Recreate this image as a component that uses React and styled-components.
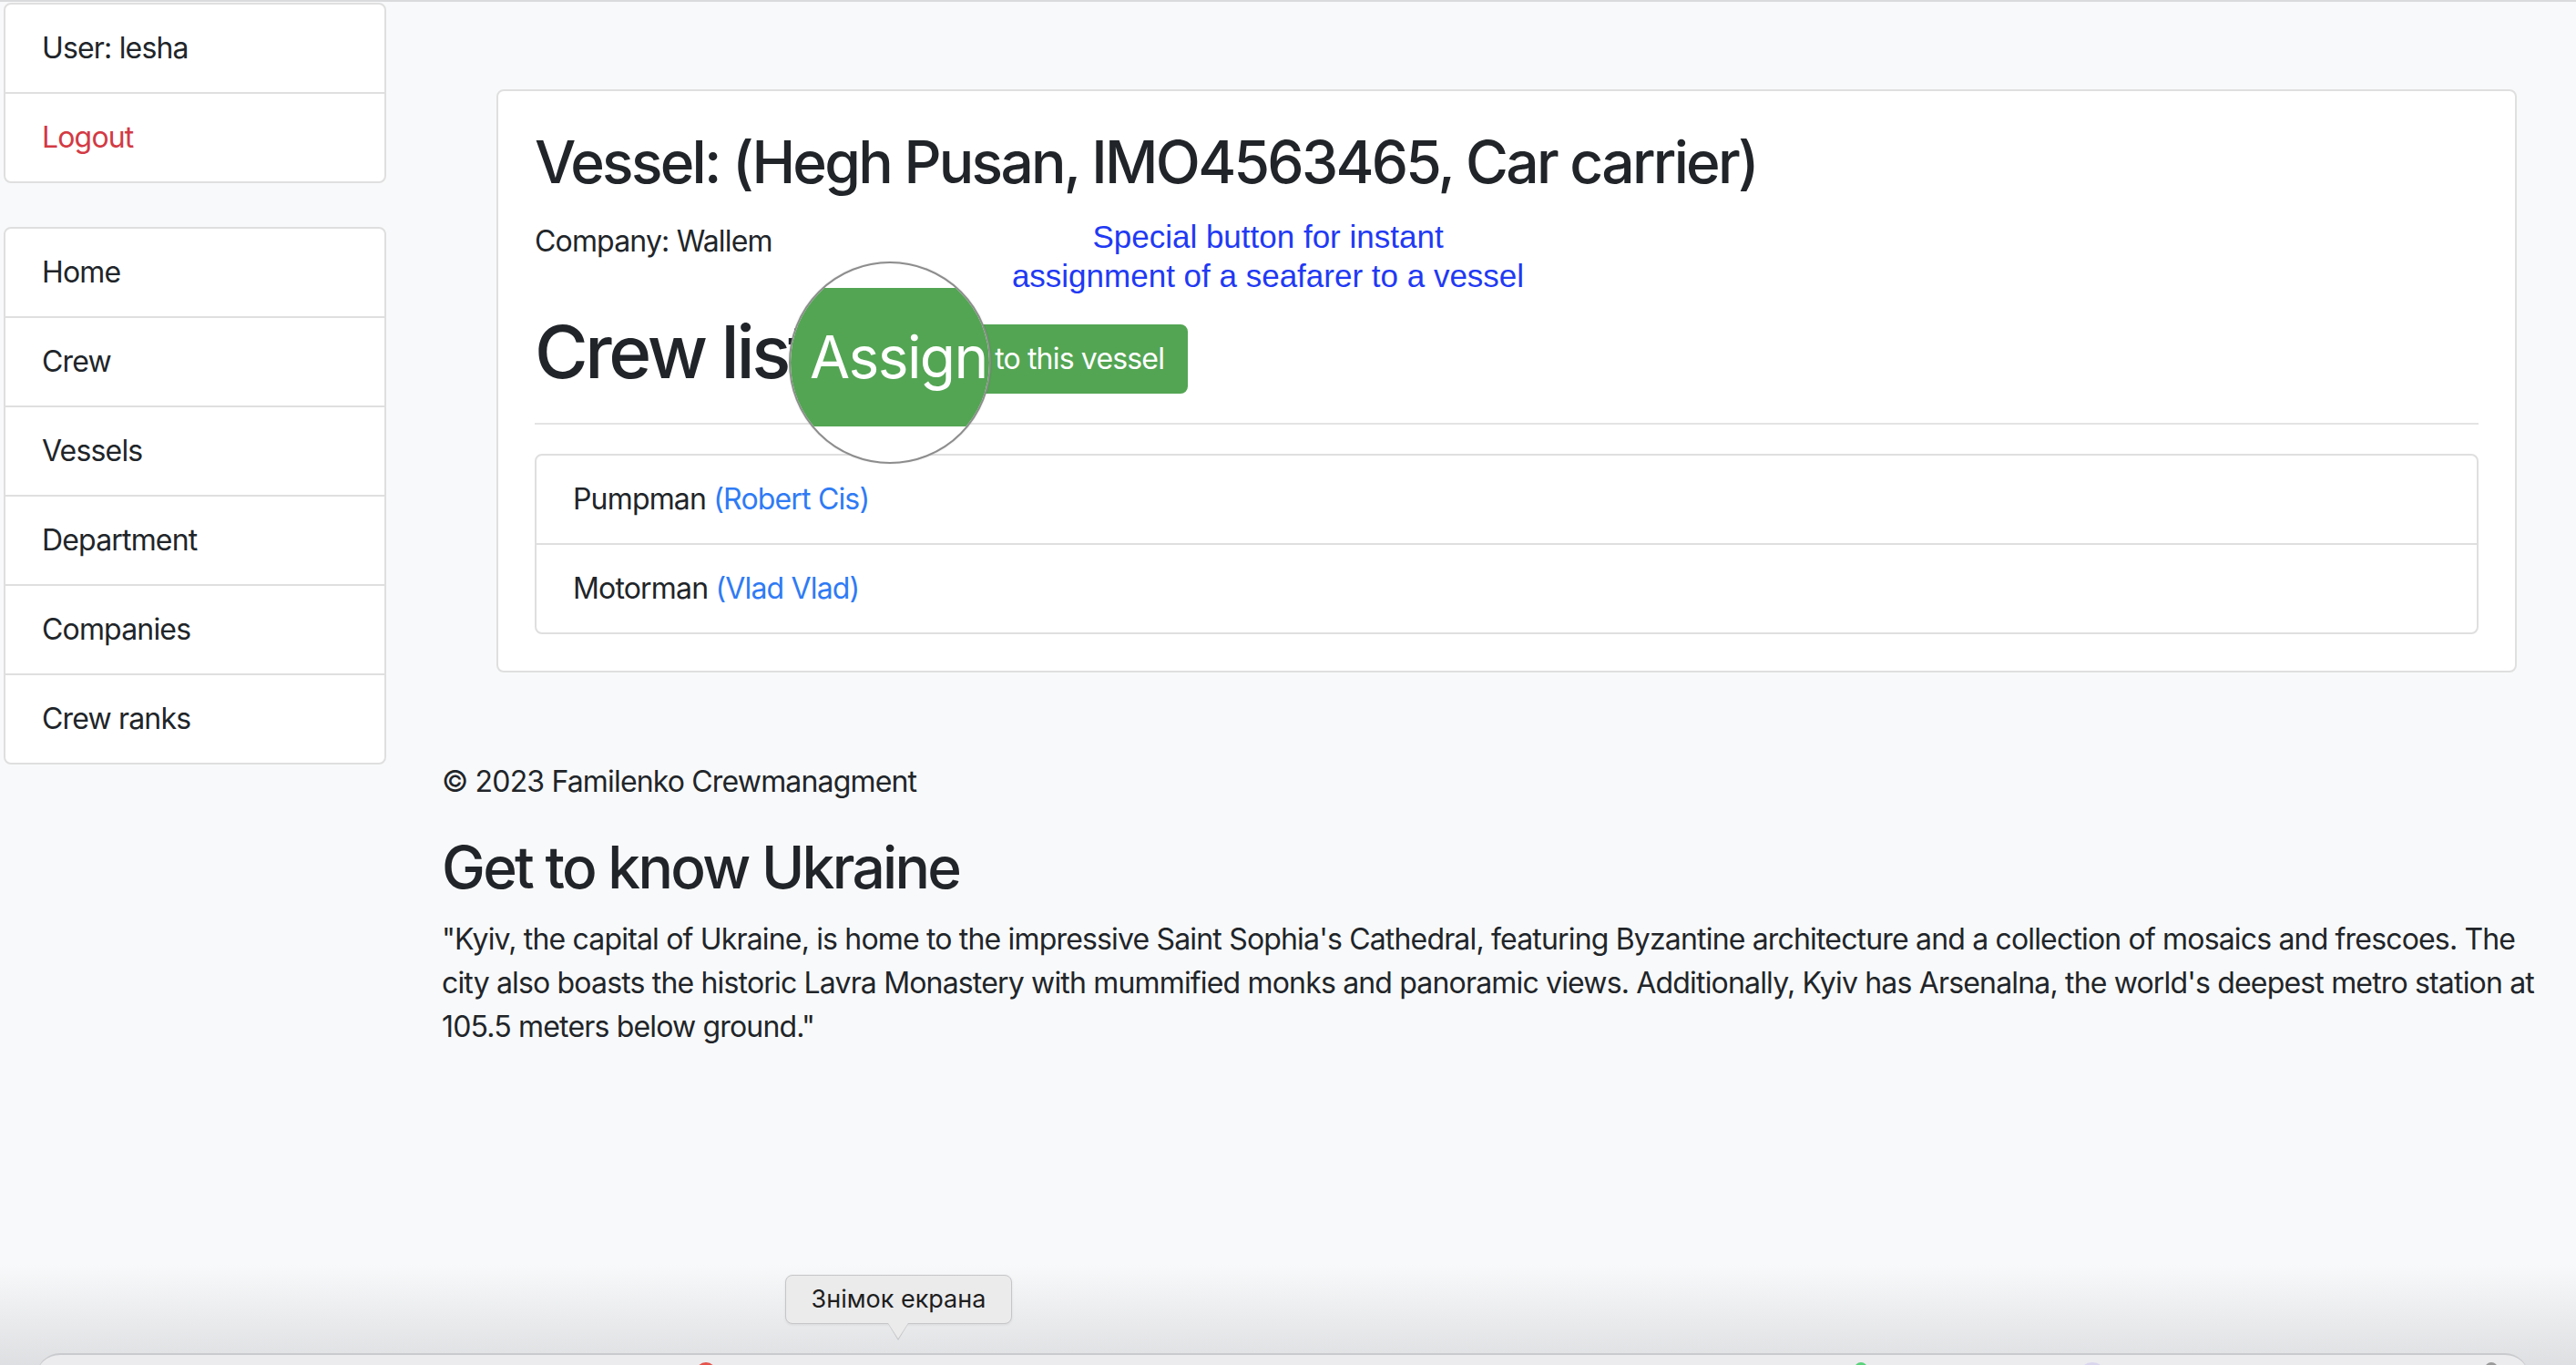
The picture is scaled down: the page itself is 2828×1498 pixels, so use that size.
import React from "react";
import styled, { createGlobalStyle } from "styled-components";

const GlobalStyle = createGlobalStyle`
  html, body {
    margin: 0;
    padding: 0;
  }
  body {
    background: #f8f9fa;
    font-family: Inter, "Noto Sans", sans-serif;
    font-size: 32px;
    line-height: 48px;
    letter-spacing: -0.83px;
    color: #212529;
  }
  * {
    box-sizing: border-box;
  }
`;

const Screen = styled.div`
  position: relative;
  width: 2828px;
  height: 1498px;
  overflow: hidden;
  border-top: 2px solid #dadbdd;
`;

const Layout = styled.div`
  display: flex;
  align-items: flex-start;
`;

const Sidebar = styled.aside`
  width: 420px;
  margin: 1px 0 0 4px;
  display: flex;
  flex-direction: column;
  gap: 48px;
`;

const ListGroup = styled.ul`
  list-style: none;
  margin: 0;
  padding: 0;
  background: #fff;
  border: 2px solid #dfdfdf;
  border-radius: 8px;
  overflow: hidden;
`;

const ListItem = styled.li`
  padding: 24px 40px;
  color: ${(props) => (props.$danger ? "#d33a44" : "#212529")};
  & + & {
    border-top: 2px solid #dfdfdf;
  }
`;

const Main = styled.main`
  flex: 1;
  padding-left: 61px;
`;

const Card = styled.section`
  margin: 96px 0 0 60px;
  width: 2218px;
  background: #fff;
  border: 2px solid #dfdfdf;
  border-radius: 8px;
  padding: 40px;
`;

const Heading = styled.h2`
  margin: 0 0 ${(props) => props.$gap || 16}px;
  font-size: 64px;
  line-height: 1.2;
  font-weight: 500;
  letter-spacing: -0.042em;
`;

const Text = styled.p`
  margin: 0 0 ${(props) => props.$gap || 32}px;
`;

const HeadingRow = styled.div`
  display: flex;
  align-items: flex-start;
  gap: 72px;
`;

const CrewTitle = styled.h1`
  margin: 0;
  font-size: 80px;
  line-height: 96px;
  font-weight: 500;
  letter-spacing: -0.042em;
`;

const AssignButton = styled.button`
  margin-top: 18px;
  padding: 12px 24px;
  font-family: inherit;
  font-size: 32px;
  line-height: 48px;
  letter-spacing: inherit;
  color: #fff;
  background: #53a553;
  border: 2px solid #53a553;
  border-radius: 8px;
`;

const Divider = styled.hr`
  margin: 30px 0 32px;
  border: 0;
  border-top: 2px solid #e4e4e4;
`;

const CrewLink = styled.a`
  color: #2f7bf5;
  text-decoration: none;
`;

const Footer = styled.footer`
  margin-top: 96px;
  width: 2313px;
`;

/* screenshot annotations drawn over the page */
const Magnifier = styled.div`
  position: absolute;
  left: 866px;
  top: 285px;
  width: 222px;
  height: 222px;
  border-radius: 50%;
  border: 2px solid #8d8d8d;
  background: #fff;
  overflow: hidden;
  box-shadow: 0 0 2px rgba(0, 0, 0, 0.15);
`;

const MagnifiedButton = styled.div`
  margin-top: 27px;
  height: 152px;
  background: #53a553;
  display: flex;
  align-items: center;
  padding-left: 21px;
  color: #fff;
  font-size: 64px;
  line-height: 1.2;
  letter-spacing: -0.025em;
`;

const Annotation = styled.div`
  position: absolute;
  left: 1042px;
  top: 236px;
  width: 700px;
  text-align: center;
  font-family: "Liberation Sans", Arial, sans-serif;
  font-size: 35px;
  line-height: 43px;
  letter-spacing: 0;
  color: #2139f4;
`;

/* macOS dock peeking in at the bottom */
const DockShade = styled.div`
  position: absolute;
  left: 0;
  right: 0;
  bottom: 0;
  height: 110px;
  background: linear-gradient(to bottom, rgba(200, 202, 206, 0), rgba(200, 202, 206, 0.55));
`;

const Dock = styled.div`
  position: absolute;
  left: 40px;
  right: 52px;
  top: 1483px;
  height: 40px;
  background: #ececef;
  border-top: 2px solid #c9cacd;
  border-radius: 26px 26px 0 0;
`;

const DockIcon = styled.span`
  position: absolute;
  top: 8px;
  left: ${(props) => props.$x}px;
  width: ${(props) => props.$size}px;
  height: ${(props) => props.$size}px;
  border-radius: 50%;
  background: ${(props) => props.$color};
`;

const Tooltip = styled.div`
  position: absolute;
  left: 862px;
  top: 1397px;
  width: 249px;
  height: 54px;
  display: flex;
  align-items: center;
  justify-content: center;
  background: #ebebec;
  border: 1px solid #c6c6c8;
  border-radius: 8px;
  font-size: 27px;
  letter-spacing: 0;
  color: #1e1e1e;
  box-shadow: 0 1px 3px rgba(0, 0, 0, 0.08);
  &::before,
  &::after {
    content: "";
    position: absolute;
    left: 112px;
    border-left: 11px solid transparent;
    border-right: 11px solid transparent;
  }
  &::before {
    bottom: -19px;
    border-top: 18px solid #c6c6c8;
  }
  &::after {
    bottom: -17px;
    border-top: 17px solid #ebebec;
  }
`;

const sideMenu = ["Home", "Crew", "Vessels", "Department", "Companies", "Crew ranks"];

const crew = [
  { rank: "Pumpman", name: "Robert Cis" },
  { rank: "Motorman", name: "Vlad Vlad" },
];

export default function App() {
  return (
    <>
      <GlobalStyle />
      <Screen>
        <Layout>
          <Sidebar>
            <ListGroup>
              <ListItem>User: lesha</ListItem>
              <ListItem $danger>Logout</ListItem>
            </ListGroup>
            <ListGroup>
              {sideMenu.map((item) => (
                <ListItem key={item}>{item}</ListItem>
              ))}
            </ListGroup>
          </Sidebar>
          <Main>
            <Card>
              <Heading $gap={24}>Vessel: (Hegh Pusan, IMO4563465, Car carrier)</Heading>
              <Text $gap={49}>Company: Wallem</Text>
              <HeadingRow>
                <CrewTitle>Crew list</CrewTitle>
                <AssignButton>Assign to this vessel</AssignButton>
              </HeadingRow>
              <Divider />
              <ListGroup>
                {crew.map((c) => (
                  <ListItem key={c.rank}>
                    {c.rank} <CrewLink href="#">({c.name})</CrewLink>
                  </ListItem>
                ))}
              </ListGroup>
            </Card>
            <Footer>
              <Text>© 2023 Familenko Crewmanagment</Text>
              <Heading>Get to know Ukraine</Heading>
              <Text>
                "Kyiv, the capital of Ukraine, is home to the impressive Saint Sophia's Cathedral,
                featuring Byzantine architecture and a collection of mosaics and frescoes. The city also
                boasts the historic Lavra Monastery with mummified monks and panoramic views.
                Additionally, Kyiv has Arsenalna, the world's deepest metro station at 105.5 meters below
                ground."
              </Text>
            </Footer>
          </Main>
        </Layout>

        <Annotation>
          Special button for instant
          <br />
          assignment of a seafarer to a vessel
        </Annotation>
        <Magnifier>
          <MagnifiedButton>Assign</MagnifiedButton>
        </Magnifier>

        <DockShade />
        <Dock>
          <DockIcon $x={724} $size={22} $color="#e5534b" />
          <DockIcon $x={1996} $size={14} $color="#5ad27a" />
          <DockIcon $x={2242} $size={30} $color="#d9d6ee" />
          <DockIcon $x={2688} $size={14} $color="#9a9a9a" />
        </Dock>
        <Tooltip>Знімок екрана</Tooltip>
      </Screen>
    </>
  );
}
